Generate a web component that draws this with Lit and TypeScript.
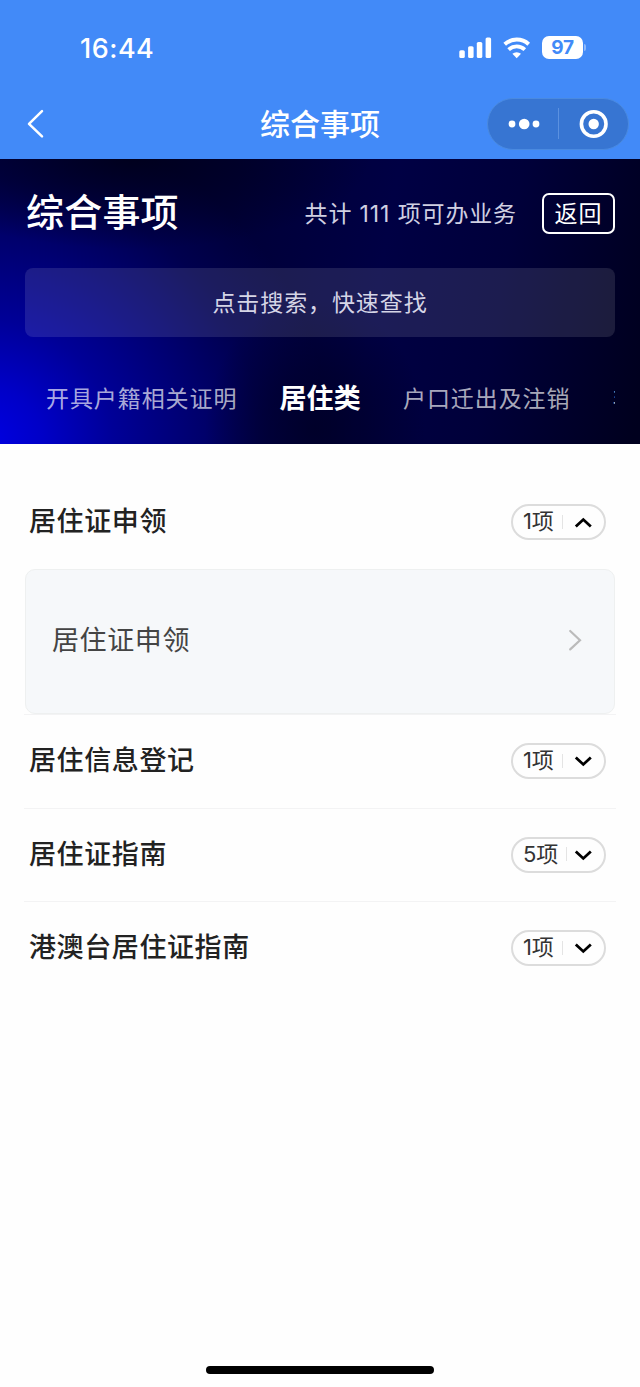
import { LitElement, html, css, svg } from "lit";
import { customElement, property, state } from "lit/decorators.js";

interface Group {
  name: string;
  count: number;
  items: string[];
}

const FONT = css`Inter, "Noto Sans CJK SC", sans-serif`;

@customElement("status-bar")
class StatusBar extends LitElement {
  static styles = css`
    :host { display: flex; height: 88px; box-sizing: border-box; padding: 7px 54px 0 80px; align-items: center; justify-content: space-between; color: #fff; font-family: ${FONT}; }
    .time { font-size: 27px; font-weight: 550; line-height: 32px; letter-spacing: 0.5px; padding-top: 2px; }
    .icons { display: flex; align-items: center; }
    .signal { width: 33px; height: 22px; margin-right: 11px; }
    .wifi { width: 28px; height: 22px; margin-right: 11px; }
    .battery { width: 41px; height: 23px; border-radius: 7px; background: #fff; color: #428af8; font-size: 19px; font-weight: 650; line-height: 24px; text-align: center; letter-spacing: -0.3px; }
    .cap { width: 2px; height: 7px; margin-left: 1px; border-radius: 0 2px 2px 0; background: #8db8fb; }
  `;
  render() {
    return html`
      <span class="time">16:44</span>
      <div class="icons">
        <svg class="signal" viewBox="0 0 33 22" fill="#fff">
          <rect x="0.3" y="13.2" width="5.5" height="7.8" rx="1.6" />
          <rect x="9.1" y="9.2" width="5.5" height="11.8" rx="1.6" />
          <rect x="17.8" y="5" width="5.5" height="16" rx="1.6" />
          <rect x="26.6" y="0.5" width="5.5" height="20.5" rx="1.6" />
        </svg>
        <svg class="wifi" viewBox="0 0 28 22">
          <path d="M1.7 7.2A18 18 0 0 1 25.7 7.2" fill="none" stroke="#fff" stroke-width="4" />
          <path d="M5.6 12.6A12 12 0 0 1 21.8 12.6" fill="none" stroke="#fff" stroke-width="3.8" />
          <path d="M9.4 16.8A6.6 6.6 0 0 1 18 16.8L13.7 21.2Z" fill="#fff" />
        </svg>
        <div class="battery">97</div>
        <div class="cap"></div>
      </div>
    `;
  }
}

@customElement("nav-bar")
class NavBar extends LitElement {
  @property() heading = "";
  static styles = css`
    :host { display: grid; grid-template-columns: 1fr auto 1fr; align-items: center; height: 71px; box-sizing: border-box; padding: 0 11px 0 26px; color: #fff; font-family: ${FONT}; }
    .back { width: 18px; height: 30px; }
    .heading { font-size: 30px; font-weight: 500; line-height: 44px; margin-left: -15px; }
    .capsule { justify-self: end; display: flex; align-items: center; width: 142px; height: 52px; box-sizing: border-box; border: 1px solid #4a8ae0; border-radius: 26px; background: #3775d2; }
    .half { flex: 1; display: flex; justify-content: center; }
    .half svg { margin-left: 2px; }
    .rule { width: 1px; height: 31px; background: #5b91e0; }
  `;
  render() {
    return html`
      <svg class="back" viewBox="0 0 18 30"><path d="M16 2.2 3 14.8 16 27.4" fill="none" stroke="#fff" stroke-width="2.5" stroke-linecap="round" stroke-linejoin="round" /></svg>
      <span class="heading">${this.heading}</span>
      <div class="capsule">
        <div class="half">
          <svg width="34" height="12" viewBox="0 0 34 12" fill="#fff"><circle cx="5" cy="6" r="3.4" /><circle cx="17.2" cy="6" r="5.3" /><circle cx="29" cy="6" r="3.4" /></svg>
        </div>
        <div class="rule"></div>
        <div class="half">
          <svg width="30" height="30" viewBox="0 0 30 30"><circle cx="14.7" cy="15" r="12.3" fill="none" stroke="#fff" stroke-width="3.6" /><circle cx="14.7" cy="15" r="5.2" fill="#fff" /></svg>
        </div>
      </div>
    `;
  }
}

@customElement("hero-panel")
class HeroPanel extends LitElement {
  @property({ type: Number }) total = 0;
  @property({ attribute: false }) tabs: string[] = [];
  @property({ type: Number }) active = 0;
  static styles = css`
    :host {
      display: block; height: 285px; box-sizing: border-box; padding: 0 25px; color: #fff; font-family: ${FONT};
      background:
        radial-gradient(ellipse 110px 130px at 315px 270px, rgba(0, 0, 30, 0.7) 0%, rgba(0, 0, 30, 0.45) 45%, rgba(0, 0, 34, 0) 100%),
        radial-gradient(ellipse 240px 90px at 130px 0, rgba(0, 0, 22, 0.8), rgba(0, 0, 22, 0) 100%),
        radial-gradient(ellipse 350px 330px at -20px 285px, #0000e6 0%, rgba(0, 0, 208, 0.94) 18%, rgba(0, 0, 165, 0.88) 38%, rgba(0, 0, 130, 0.78) 60%, rgba(0, 0, 100, 0.5) 80%, rgba(0, 0, 60, 0) 100%),
        linear-gradient(100deg, #000038 0%, #000038 35%, #000044 58%, #00003a 76%, #00001e 99%);
    }
    .top { display: flex; align-items: center; height: 109px; }
    .title { flex: 1; font-size: 38px; font-weight: 500; line-height: 56px; letter-spacing: 0.2px; padding-left: 1px; margin-top: -3px; }
    .total { font-size: 23px; line-height: 34px; letter-spacing: 0.87px; color: #d0d0e2; margin-right: 25px; }
    .return { width: 73px; height: 41px; box-sizing: border-box; border: 2px solid #fff; border-radius: 7px; font-size: 23px; line-height: 38px; letter-spacing: 1px; text-align: center; }
    .search { height: 69px; border-radius: 8px; background: rgba(255, 255, 255, 0.11); color: #d5d5e6; font-size: 23px; line-height: 70px; letter-spacing: 0.9px; text-align: center; }
    .tabs { display: flex; gap: 42px; align-items: center; height: 107px; padding-left: 21px; overflow: hidden; white-space: nowrap; }
    .tab { flex: none; font-size: 23px; line-height: 36px; letter-spacing: 0.92px; color: rgba(255, 255, 255, 0.68); margin-top: 17px; }
    .current { font-size: 27px; font-weight: 700; letter-spacing: 0.2px; color: #fff; margin-top: 17px; }
  `;
  render() {
    return html`
      <div class="top">
        <span class="title">综合事项</span>
        <span class="total">共计 ${this.total} 项可办业务</span>
        <div class="return">返回</div>
      </div>
      <div class="search">点击搜索，快速查找</div>
      <div class="tabs">
        ${this.tabs.map((t, i) => html`<span class="tab ${i === this.active ? "current" : ""}">${t}</span>`)}
      </div>
    `;
  }
}

@customElement("service-group")
class ServiceGroup extends LitElement {
  @property({ attribute: false }) group!: Group;
  @property({ type: Boolean }) open = false;
  static styles = css`
    :host { display: block; border-bottom: 1px solid #f3f3f4; font-family: ${FONT}; }
    :host(:last-of-type) { border-bottom-color: transparent; }
    .row { display: flex; align-items: center; justify-content: space-between; height: 92.5px; box-sizing: border-box; padding: 0 10px 0 5px; }
    .name { font-size: 27px; font-weight: 500; line-height: 40px; letter-spacing: 0.6px; color: #222; margin-top: 0; }
    .pill { display: flex; align-items: center; width: 95px; height: 36px; box-sizing: border-box; border: 2px solid #dcdcdc; border-radius: 18px; padding: 0 11px 0 10px; }
    .count { font-size: 22px; line-height: 30px; color: #333; margin-top: -2px; letter-spacing: -0.1px; }
    .rule { width: 1px; height: 14px; background: #e4e4e4; margin-left: 8px; margin-top: -1px; }
    .arrow { margin-left: auto; width: 20px; height: 14px; }
    .item { display: flex; align-items: center; justify-content: space-between; height: 145.5px; box-sizing: border-box; margin: 0 1px 0 1px; padding: 0 32px 0 26px; border: 1px solid #eef0f0; border-radius: 10px; background: #f6f8fa; color: #444; font-size: 27px; line-height: 40px; letter-spacing: 0.6px; }
    .item svg { margin-top: -3px; }
  `;
  render() {
    const arrow = this.open ? svg`<path d="M2.8 11.6 10.3 4.6 17.8 11.6" />` : svg`<path d="M2.8 3.4 10.3 10.4 17.8 3.4" />`;
    return html`
      <div class="row">
        <span class="name">${this.group.name}</span>
        <div class="pill">
          <span class="count">${this.group.count}项</span>
          <div class="rule"></div>
          <svg class="arrow" viewBox="0 0 20 14" fill="none" stroke="#000" stroke-width="2.8">${arrow}</svg>
        </div>
      </div>
      ${this.open
        ? this.group.items.map(
            (n) => html`<div class="item"><span>${n}</span>
              <svg width="14" height="22" viewBox="0 0 14 22" fill="none" stroke="#bbb" stroke-width="2.2" stroke-linecap="round"><path d="M2.2 2 12 11.2 2.2 20.4" /></svg></div>`
          )
        : ""}
    `;
  }
}

@customElement("app-root")
class AppRoot extends LitElement {
  @state() private tabs = ["开具户籍相关证明", "居住类", "户口迁出及注销", "非"];
  @state() private groups: Group[] = [
    { name: "居住证申领", count: 1, items: ["居住证申领"] },
    { name: "居住信息登记", count: 1, items: [] },
    { name: "居住证指南", count: 5, items: [] },
    { name: "港澳台居住证指南", count: 1, items: [] },
  ];
  static styles = css`
    :host { display: flex; flex-direction: column; width: 640px; height: 1387px; background: #fefefe; overflow: hidden; }
    .head { background: #428af8; }
    .list { flex: 1; padding: 32px 24px 0; }
    .home { align-self: center; width: 228px; height: 8px; border-radius: 4px; background: #000; margin-bottom: 13px; }
  `;
  render() {
    return html`
      <div class="head">
        <status-bar></status-bar>
        <nav-bar heading="综合事项"></nav-bar>
      </div>
      <hero-panel .total=${111} .tabs=${this.tabs} .active=${1}></hero-panel>
      <div class="list">
        ${this.groups.map((g, i) => html`<service-group .group=${g} .open=${i === 0}></service-group>`)}
      </div>
      <div class="home"></div>
    `;
  }
}
